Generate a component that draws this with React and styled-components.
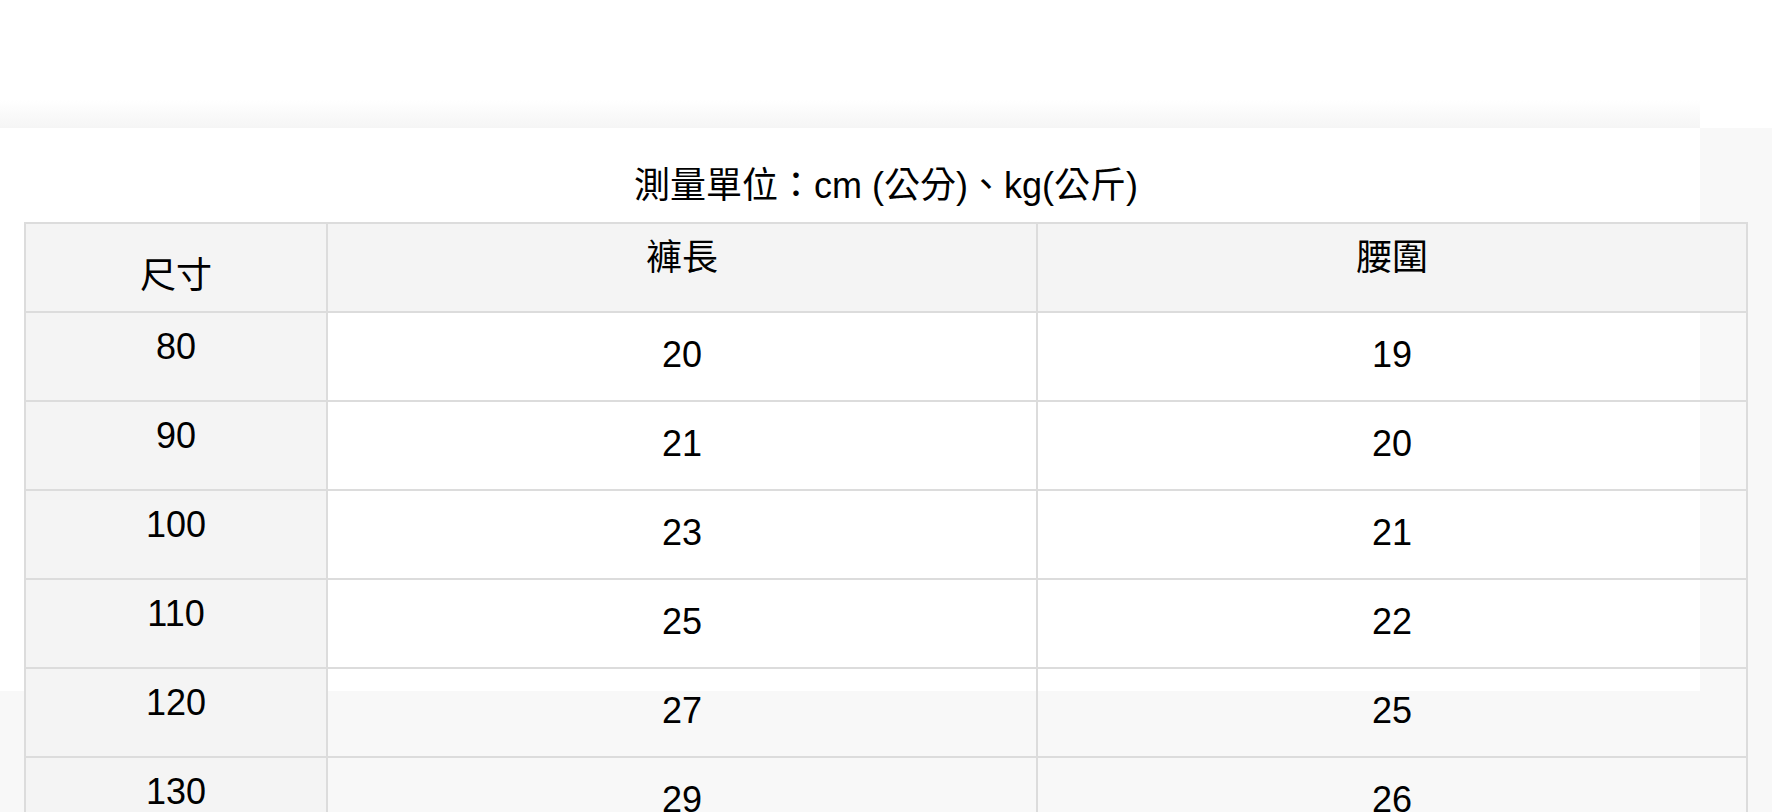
import React from 'react';
import styled, { createGlobalStyle } from 'styled-components';

const GlobalStyle = createGlobalStyle`
    html, body {
        margin: 0;
        padding: 0;
        overflow: hidden;
    }
    body {
        font-family: "Liberation Sans", "Noto Sans CJK TC", sans-serif;
        color: #000;
    }
`;

// page backdrop: white top strip, fading bar, white panel, grey everywhere else
const Page = styled.div`
    height: 812px;
    overflow: hidden;
    padding-top: 168px;
    box-sizing: border-box;
    background-color: #f8f8f8;
    background-image:
        linear-gradient(to bottom, #ffffff, #f5f5f5),
        linear-gradient(#ffffff, #ffffff),
        linear-gradient(#ffffff, #ffffff);
    background-size: 1700px 28px, 1700px 563px, 100% 128px;
    background-position: 0 100px, 0 128px, 0 0;
    background-repeat: no-repeat;
`;

const Caption = styled.div`
    margin: 0 24px 18px;
    font-size: 36px;
    line-height: 36px;
    text-align: center;
`;

const SizeTable = styled.div`
    margin: 0 24px;
    display: grid;
    grid-template-columns: 302px 1fr 1fr;
    border-top: 2px solid #dcdcdc;
    border-left: 2px solid #dcdcdc;
`;

const Cell = styled.div`
    box-sizing: border-box;
    height: 89px;
    padding-top: ${({ $pad }) => $pad}px;
    border-right: 2px solid #dcdcdc;
    border-bottom: 2px solid #dcdcdc;
    background: ${({ $shaded }) => ($shaded ? '#f4f4f4' : 'transparent')};
    font-size: 36px;
    line-height: 36px;
    text-align: center;
`;

const headers = ['尺寸', '褲長', '腰圍'];

const rows = [
    ['80', '20', '19'],
    ['90', '21', '20'],
    ['100', '23', '21'],
    ['110', '25', '22'],
    ['120', '27', '25'],
    ['130', '29', '26'],
];

const App = () => {
    return (
        <>
            <GlobalStyle />
            <Page>
                <Caption>測量單位：cm (公分)、kg(公斤)</Caption>
                <SizeTable>
                    {headers.map((h, i) => (
                        <Cell key={h} $shaded $pad={i === 0 ? 34 : 16}>
                            {h}
                        </Cell>
                    ))}
                    {rows.map(row =>
                        row.map((value, i) => (
                            <Cell
                                key={row[0] + '-' + i}
                                $shaded={i === 0}
                                $pad={i === 0 ? 16 : 24}
                            >
                                {value}
                            </Cell>
                        ))
                    )}
                </SizeTable>
            </Page>
        </>
    );
};

export default App;
